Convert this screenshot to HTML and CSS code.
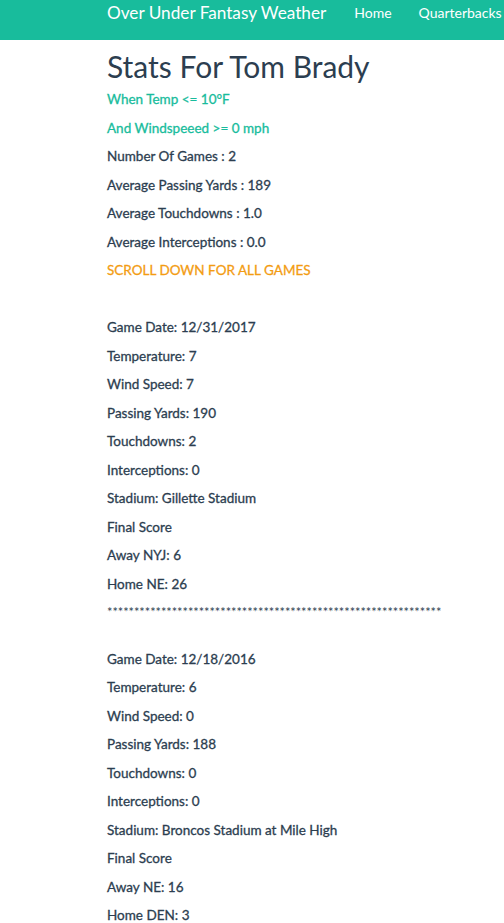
FILE: index.html
```html
<!DOCTYPE html>
<html>
<head>
<meta charset="utf-8">
<link rel="stylesheet" href="styles.css">
</head>
<body>
<nav class="navbar">
  <span class="brand">Over Under Fantasy Weather</span>
  <span class="nav-link">Home</span>
  <span class="nav-link">Quarterbacks</span>
</nav>
<main class="content">
  <h2 class="title">Stats For Tom Brady</h2>
  <p class="line teal">When Temp &lt;= 10&deg;F</p>
  <p class="line teal">And Windspeeed &gt;= 0 mph</p>
  <p class="line">Number Of Games : 2</p>
  <p class="line">Average Passing Yards : 189</p>
  <p class="line">Average Touchdowns : 1.0</p>
  <p class="line">Average Interceptions : 0.0</p>
  <p class="line orange">SCROLL DOWN FOR ALL GAMES</p>
  <div class="game">
    <p class="line">Game Date: 12/31/2017</p>
    <p class="line">Temperature: 7</p>
    <p class="line">Wind Speed: 7</p>
    <p class="line">Passing Yards: 190</p>
    <p class="line">Touchdowns: 2</p>
    <p class="line">Interceptions: 0</p>
    <p class="line">Stadium: Gillette Stadium</p>
    <p class="line">Final Score</p>
    <p class="line">Away NYJ: 6</p>
    <p class="line">Home NE: 26</p>
    <p class="stars">**************************************************************</p>
  </div>
  <div class="game">
    <p class="line">Game Date: 12/18/2016</p>
    <p class="line">Temperature: 6</p>
    <p class="line">Wind Speed: 0</p>
    <p class="line">Passing Yards: 188</p>
    <p class="line">Touchdowns: 0</p>
    <p class="line">Interceptions: 0</p>
    <p class="line">Stadium: Broncos Stadium at Mile High</p>
    <p class="line">Final Score</p>
    <p class="line">Away NE: 16</p>
    <p class="line">Home DEN: 3</p>
  </div>
</main>
</body>
</html>
```
FILE: styles.css
```css
html, body {
  margin: 0;
  padding: 0;
  background: #fff;
}
body {
  font-family: Lato, "Open Sans", sans-serif;
  color: #2c3e50;
  overflow: hidden;
}
.navbar {
  height: 40px;
  background: #18bc9c;
  display: flex;
  align-items: flex-start;
  padding-left: 107px;
  white-space: nowrap;
  color: #fff;
}
.brand {
  font-size: 17.2px;
  line-height: 26px;
  margin-right: 28px;
}
.nav-link {
  font-size: 14px;
  line-height: 26px;
  margin-right: 27px;
}
.content {
  padding-left: 107px;
}
.title {
  font-size: 30px;
  font-weight: 400;
  margin: 6px 0 -1px;
  line-height: 40px;
}
.line {
  margin: 0;
  font-size: 13.5px;
  font-weight: 400;
  line-height: 28.5px;
  white-space: nowrap;
  -webkit-text-stroke: 0.3px #2c3e50;
}
.teal { color: #18bc9c; -webkit-text-stroke-color: #18bc9c; }
.orange { color: #f39c12; -webkit-text-stroke-color: #f39c12; }
.game {
  padding-top: 28.5px;
}
.stars {
  margin: 0 0 -5px;
  padding-top: 5px;
  font-size: 12.7px;
  line-height: 18px;
  white-space: nowrap;
}
```
